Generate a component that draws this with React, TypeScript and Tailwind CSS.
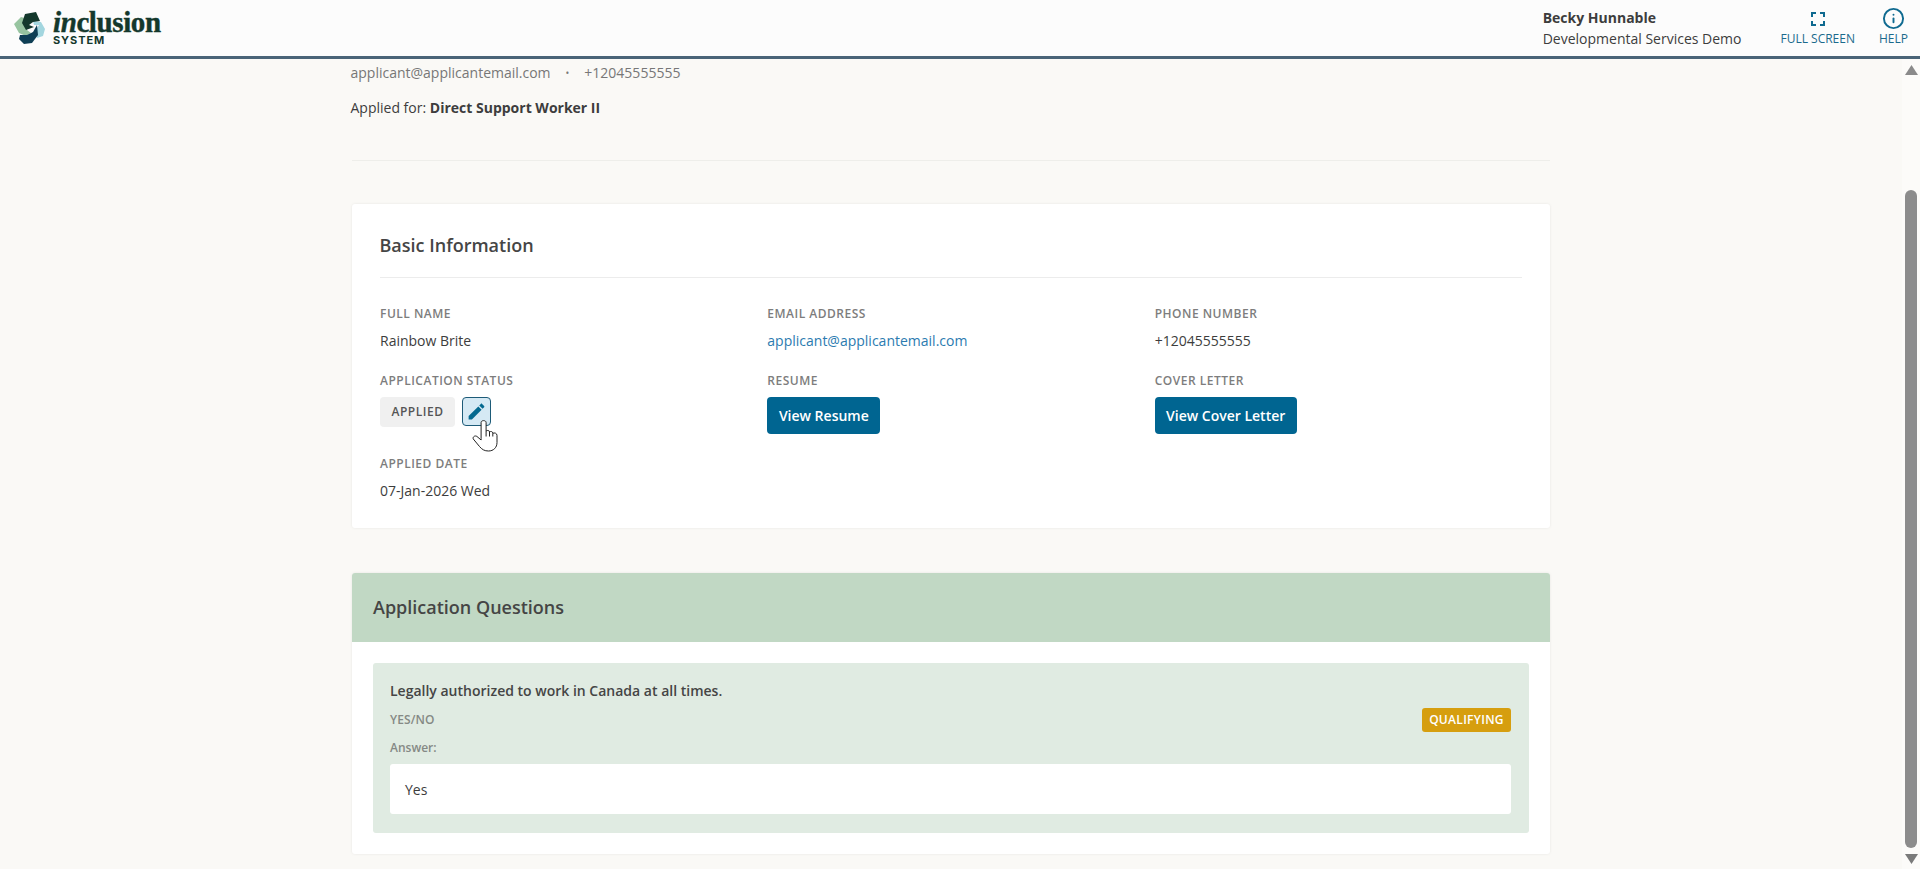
import React from "react";
import { Info } from "lucide-react";

function LogoMark() {
  return (
    <svg width="32" height="32" viewBox="0 0 32 32" className="shrink-0">
      <polygon points="0,12 7,5 14,7 11,13 13,18 17,21 12,24 5,21" fill="#97c4a0" />
      <polygon points="19,9 27,10 31,17 29,24 23,26 21,19 25,13 20,13" fill="#a3d6df" />
      <polygon points="11,2 22,0 26,9 19,10 15,13 20,15 12,18 8,11" fill="#14382c" />
      <polygon points="6,23 13,23 19,20 23,13 24,23 18,31 10,32 5,27" fill="#0f3f55" />
    </svg>
  );
}

function Label({ children, className = "" }: { children: React.ReactNode; className?: string }) {
  return (
    <div className={"text-[12px] leading-4 font-semibold tracking-[0.5px] text-[#7d7d7d] uppercase " + className}>
      {children}
    </div>
  );
}

function Hand() {
  return (
    <svg width="26" height="33" viewBox="-0.5 -0.5 26 33" className="absolute left-[10px] top-[22px]">
      <path
        d="M8.6 19V3C8.6.5 13.6.5 13.6 3V11.5C15 10.5 17 10.8 17 12.5C18.3 11.5 20.3 12 20.3 13.8C21.8 13 24.5 13.5 24.5 16V23C24.5 28 21 31.5 16 31.5C12 31.5 9.5 30 7 27L.8 19.5C-.2 17.5 2.5 15.5 4.5 17L8.6 20.5Z"
        fill="#fff"
        stroke="#222"
        strokeWidth="1"
        strokeLinejoin="round"
      />
      <path d="M13.6 11.5V17M17 12.5V17M20.3 13.8V17" fill="none" stroke="#222" strokeWidth="1" />
    </svg>
  );
}

export default function App() {
  return (
    <div className="h-[869px] w-[1920px] flex flex-col overflow-hidden bg-[#faf9f6] text-[#3d3d3d] font-['Open_Sans','Noto_Sans',sans-serif] text-[14px] leading-5">
      <header className="h-[59px] shrink-0 flex items-start bg-[#fcfcfc] border-b-[3px] border-[#4a6478]">
        <div className="flex items-start pl-[14px] pt-[12px] gap-[7px]">
          <LogoMark />
          <div className="flex flex-col">
            <div className="h-[21px] font-['Liberation_Serif',serif] font-bold text-[29px] leading-[20px] tracking-[-0.4px] text-[#14382c] [-webkit-text-stroke:0.4px_#14382c]">
              <span className="italic">in</span>clusion
            </div>
            <div className="mt-[2px] text-[11px] leading-[10px] font-bold tracking-[0.9px] text-[#14382c] font-['Inter',sans-serif]">
              SYSTEM
            </div>
          </div>
        </div>
        <div className="ml-auto flex items-start">
          <div className="pt-[8px] mr-[39px]">
            <div className="font-bold leading-5 text-[#3d3d3d]">Becky Hunnable</div>
            <div className="mt-[1px] leading-5">Developmental Services Demo</div>
          </div>
          <div className="flex flex-col items-center text-[#1b6a8c] mr-[24px]">
            <svg width="24" height="24" viewBox="0 0 24 24" fill="#0f6a90" className="mt-[7px]">
              <path d="M7 14H5v5h5v-2H7v-3zm-2-4h2V7h3V5H5v5zm12 7h-3v2h5v-5h-2v3zM14 5v2h3v3h2V5h-5z" />
            </svg>
            <div className="text-[12px] leading-4 mt-[0px]">FULL SCREEN</div>
          </div>
          <div className="flex flex-col items-center text-[#1b6a8c] mr-[12px]">
            <Info size={23} strokeWidth={2} color="#0f6a90" className="mt-[7px]" />
            <div className="text-[12px] leading-4 mt-[1px]">HELP</div>
          </div>
        </div>
      </header>

      <div className="flex-1 flex min-h-0">
        <main className="flex-1 min-w-0 pl-[352px] pt-[4px]">
          <div className="w-[1198px]">
            <div className="-ml-[1.5px] flex items-center text-[#777]">
              <span>applicant@applicantemail.com</span>
              <span className="mx-[15px] text-[10px]">•</span>
              <span>+12045555555</span>
            </div>
            <div className="-ml-[1.5px] mt-[15px]">
              Applied for: <span className="font-bold">Direct Support Worker II</span>
            </div>
            <div className="mt-[42px] border-t border-[#eeeeea]" />

            <section className="mt-[43px] h-[324px] bg-white rounded-[3px] shadow-[0_0_3px_rgba(0,0,0,0.08)] px-[28px] pt-[27px]">
              <h2 className="-ml-[0.5px] text-[18px] leading-7 font-semibold text-[#454545] pb-[18px] border-b border-[#ececec]">
                Basic Information
              </h2>
              <div className="grid grid-cols-3 gap-x-[20px] gap-y-[22px] mt-[28px]">
                <div>
                  <Label className="mb-[9px]">Full Name</Label>
                  <div>Rainbow Brite</div>
                </div>
                <div>
                  <Label className="mb-[9px]">Email Address</Label>
                  <div className="text-[#2b7bb0]">applicant@applicantemail.com</div>
                </div>
                <div>
                  <Label className="mb-[9px]">Phone Number</Label>
                  <div>+12045555555</div>
                </div>
                <div>
                  <Label className="mb-[8px]">Application Status</Label>
                  <div className="flex items-start gap-[7px]">
                    <span className="h-[30px] w-[75px] flex items-center justify-center rounded-[4px] bg-[#f0f0f0] text-[12px] font-semibold tracking-[0.5px] text-[#555]">
                      APPLIED
                    </span>
                    <div className="relative">
                      <div className="h-[29px] w-[29px] flex items-center justify-center rounded-[4px] border border-[#1d5b78] bg-[#d5e9f4]">
                        <svg width="21" height="21" viewBox="0 0 24 24" fill="#04698f">
                          <path d="M3 17.25V21h3.75L17.81 9.94l-3.75-3.75L3 17.25zM20.71 7.04c.39-.39.39-1.02 0-1.41l-2.34-2.34c-.39-.39-1.02-.39-1.41 0l-1.83 1.83 3.75 3.75 1.83-1.83z" />
                        </svg>
                      </div>
                      <Hand />
                    </div>
                  </div>
                </div>
                <div>
                  <Label className="mb-[8px]">Resume</Label>
                  <div className="h-[37px] w-[113px] flex items-center justify-center rounded-[4px] bg-[#006591] text-white font-semibold">
                    View Resume
                  </div>
                </div>
                <div>
                  <Label className="mb-[8px]">Cover Letter</Label>
                  <div className="h-[37px] w-[142px] flex items-center justify-center rounded-[4px] bg-[#006591] text-white font-semibold">
                    View Cover Letter
                  </div>
                </div>
                <div>
                  <Label className="mb-[9px]">Applied Date</Label>
                  <div>07-Jan-2026 Wed</div>
                </div>
              </div>
            </section>

            <section className="mt-[45px] h-[281px] bg-white rounded-[3px] shadow-[0_0_3px_rgba(0,0,0,0.08)] overflow-hidden">
              <div className="h-[69px] bg-[#c1d8c4] px-[21px] pb-[2px] flex items-center">
                <h2 className="text-[18px] leading-7 font-semibold text-[#454545]">Application Questions</h2>
              </div>
              <div className="mx-[21px] mt-[21px] h-[170px] rounded-[3px] bg-[#e0ebe2] pl-[17px] pr-[18px] pt-[18px]">
                <div className="font-semibold leading-5 text-[#454545]">Legally authorized to work in Canada at all times.</div>
                <div className="flex items-start justify-between">
                  <div>
                    <div className="mt-[11px] text-[12px] leading-4 font-semibold tracking-[0.1px] text-[#858985]">YES/NO</div>
                    <div className="mt-[12px] text-[12px] leading-4 font-semibold text-[#858985]">Answer:</div>
                  </div>
                  <span className="mt-[7px] h-[24px] w-[89px] flex items-center justify-center rounded-[3px] bg-[#d69e0f] text-white text-[12px] font-semibold tracking-[0.3px]">
                    QUALIFYING
                  </span>
                </div>
                <div className="mt-[8px] h-[50px] rounded-[3px] bg-white px-[15px] pt-[1px] flex items-center">Yes</div>
              </div>
            </section>
          </div>
        </main>

        <aside className="w-[18px] shrink-0 flex flex-col items-center bg-[#fcfbf9] pt-[6px] pb-[5px]">
          <svg width="13" height="10" viewBox="0 0 13 10" fill="#8a8a8a"><path d="M6.5 0L13 10H0Z" /></svg>
          <div className="mt-[115px] flex-1 w-[12px] rounded-[6px] bg-[#8c8c8c]" />
          <svg width="13" height="10" viewBox="0 0 13 10" fill="#7a7a7a" className="mt-[6px]"><path d="M0 0H13L6.5 10Z" /></svg>
        </aside>
      </div>
    </div>
  );
}
